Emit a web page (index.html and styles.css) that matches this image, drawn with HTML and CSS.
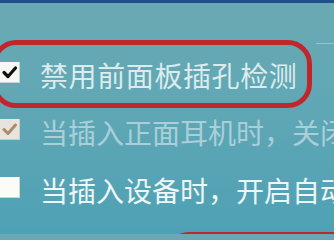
FILE: index.html
```html
<!DOCTYPE html>
<html lang="zh-CN">
<head>
<meta charset="utf-8">
<title>前面板插孔检测</title>
<link rel="stylesheet" href="styles.css">
</head>
<body>
<div class="topbar"></div>
<div class="panel">
  <div class="group-head">
    <div class="annot">
      <div class="row">
        <span class="box box-on">
          <svg viewBox="0 0 20 21" width="20" height="21"><path d="M4 10.5 L8 14.5 L15.5 6" fill="none" stroke="#111" stroke-width="3.2" stroke-linecap="round" stroke-linejoin="round"/></svg>
        </span>
        <span class="label label-main">禁用前面板插孔检测</span>
      </div>
    </div>
    <span class="gline"></span>
  </div>
  <div class="row row-2">
    <span class="box box-dis">
      <svg viewBox="0 0 20 21" width="20" height="21"><path d="M4 10.5 L8 14.5 L15.5 6" fill="none" stroke="#b0896a" stroke-width="3" stroke-linecap="round" stroke-linejoin="round"/></svg>
    </span>
    <span class="label label-dis">当插入正面耳机时，关闭后面板输出</span>
  </div>
  <div class="row row-3">
    <span class="box box-off"></span>
    <span class="label label-on">当插入设备时，开启自动弹出对话框</span>
  </div>
  <div class="annot-next"></div>
</div>
</body>
</html>
```

FILE: styles.css
```css
html, body {
  margin: 0;
  padding: 0;
  width: 334px;
  height: 234px;
  overflow: hidden;
}
body {
  background: linear-gradient(180deg, #6aa9b3 0%, #60a7b5 45%, #4ea1b5 100%);
  font-family: "Noto Sans CJK SC", "Noto Sans", sans-serif;
}
.topbar {
  height: 3px;
  background: #1f4f8c;
}
.panel {
  display: flex;
  flex-direction: column;
  align-items: flex-start;
}
.group-head {
  display: flex;
  align-items: flex-start;
  gap: 4px;
  width: 334px;
  margin-top: 37px;
}
.gline {
  flex: 1;
  height: 1px;
  margin-top: 3px;
  background: #8fc5d6;
}
.annot {
  flex: none;
  margin-left: -8px;
  width: 320px;
  box-sizing: border-box;
  border: 5px solid #c2262d;
  border-radius: 24px;
  padding: 16px 0 14px 3px;
}
.row {
  display: flex;
  align-items: flex-start;
  gap: 20px;
  white-space: nowrap;
}
.row-2 {
  margin-top: 10px;
}
.row-3 {
  margin-top: 30px;
}
.box {
  flex: none;
  width: 20px;
  height: 21px;
  margin-top: 1px;
  box-sizing: border-box;
  display: block;
}
.box svg {
  display: block;
}
.box-on {
  background: #f7f8f6;
  box-shadow: inset -1px -1px 0 #c6d2d2;
}
.box-dis {
  background: #e6e4dc;
  box-shadow: inset -1px -1px 0 #c8cccc;
}
.box-off {
  background: #fbfbf8;
  box-shadow: inset -1px -1px 0 #cfd6d6;
}
.label {
  font-size: 28px;
  line-height: 28px;
  font-weight: 400;
}
.label-main {
  color: #dcebec;
  letter-spacing: 0.6px;
}
.label-dis {
  color: #abcfd8;
}
.label-on {
  color: #eef6f6;
}
.annot-next {
  margin-top: 28px;
  margin-left: 165px;
  width: 200px;
  height: 30px;
  box-sizing: border-box;
  border: 5px solid #c2262d;
  border-bottom: none;
  border-radius: 24px 24px 0 0;
}
```
